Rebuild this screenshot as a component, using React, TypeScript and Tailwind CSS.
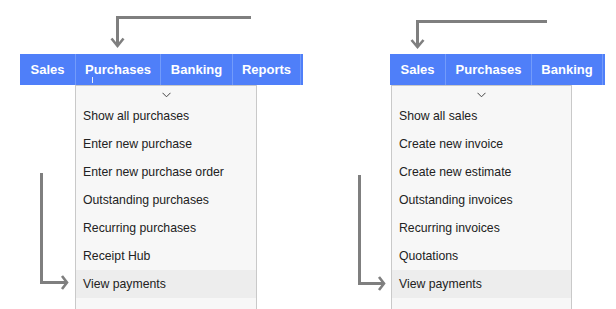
import React from "react";

type NavItem = { label: string; w: string };

const leftNav: NavItem[] = [
  { label: "Sales", w: "w-[55px]" },
  { label: "Purchases", w: "w-[85px]" },
  { label: "Banking", w: "w-[72px]" },
  { label: "Reports", w: "w-[68px]" },
  { label: "", w: "w-[3px]" },
];

const rightNav: NavItem[] = [
  { label: "Sales", w: "w-[55px]" },
  { label: "Purchases", w: "w-[86px]" },
  { label: "Banking", w: "w-[71px]" },
  { label: "", w: "w-[3px]" },
];

const purchaseItems = [
  "Show all purchases",
  "Enter new purchase",
  "Enter new purchase order",
  "Outstanding purchases",
  "Recurring purchases",
  "Receipt Hub",
  "View payments",
];

const salesItems = [
  "Show all sales",
  "Create new invoice",
  "Create new estimate",
  "Outstanding invoices",
  "Recurring invoices",
  "Quotations",
  "View payments",
];

function NavBar({ items, cursorOn }: { items: NavItem[]; cursorOn?: string }) {
  return (
    <div className="flex h-[31px] bg-[#4f7ff9]">
      {items.map((it, i) => (
        <div
          key={i}
          className={`${it.w} relative flex items-center justify-center text-[13px] font-bold text-white ${
            i > 0 ? "border-l border-[#739bfa]" : ""
          }`}
        >
          {it.label}
          {cursorOn === it.label && (
            <span className="absolute left-[16px] top-[23px] h-[6px] w-px bg-[#e8ecf7]" />
          )}
        </div>
      ))}
    </div>
  );
}

function Dropdown({ items, offset, width }: { items: string[]; offset: string; width: string }) {
  return (
    <div className={`${offset} ${width} h-[230px] border border-b-0 border-[#c9c9c9] bg-[#f7f7f7]`}>
      <div className="flex h-[16px] items-center justify-center">
        <svg width="9" height="6" viewBox="0 0 9 6" className="mt-[1px]">
          <path d="M0.5 0.8 L4.5 4.8 L8.5 0.8" fill="none" stroke="#444" strokeWidth="1" />
        </svg>
      </div>
      {items.map((t, i) => (
        <div
          key={t}
          className={`flex h-[28px] items-center pl-[7px] text-[12.25px] text-[#222] ${
            i === items.length - 1 ? "bg-[#ededed]" : ""
          }`}
        >
          {t}
        </div>
      ))}
    </div>
  );
}

function Arrows() {
  const c = "#7f7f7f";
  return (
    <svg className="pointer-events-none absolute left-0 top-0" width="616" height="309">
      <g fill="none" stroke={c} strokeWidth="3">
        {/* top left */}
        <path d="M251 17.5 H117.5 V46" />
        <path d="M111.5 38.5 L117.5 46 L123.5 38.5" strokeWidth="2.6" />
        {/* top right */}
        <path d="M547 21.5 H417.5 V47" />
        <path d="M411.5 40 L417.5 47 L423.5 40" strokeWidth="2.6" />
        {/* bottom left */}
        <path d="M41.5 173 V282.5 H66" />
        <path d="M62 276 L67 282.5 L62 289" strokeWidth="2.6" />
        {/* bottom right */}
        <path d="M359.5 175 V283.5 H383" />
        <path d="M379 277 L384 283.5 L379 290" strokeWidth="2.6" />
      </g>
    </svg>
  );
}

export default function App() {
  return (
    <div
      className="relative h-[309px] w-[616px] overflow-hidden bg-white"
      style={{ fontFamily: '"Liberation Sans", Arial, sans-serif' }}
    >
      <div className="flex pt-[54px]">
        <div className="ml-[20px] flex flex-col">
          <NavBar items={leftNav} cursorOn="Purchases" />
          <Dropdown items={purchaseItems} offset="ml-[55px]" width="w-[182px]" />
        </div>
        <div className="ml-[87px] flex flex-col">
          <NavBar items={rightNav} />
          <Dropdown items={salesItems} offset="ml-[1px]" width="w-[181px]" />
        </div>
      </div>
      <Arrows />
    </div>
  );
}
